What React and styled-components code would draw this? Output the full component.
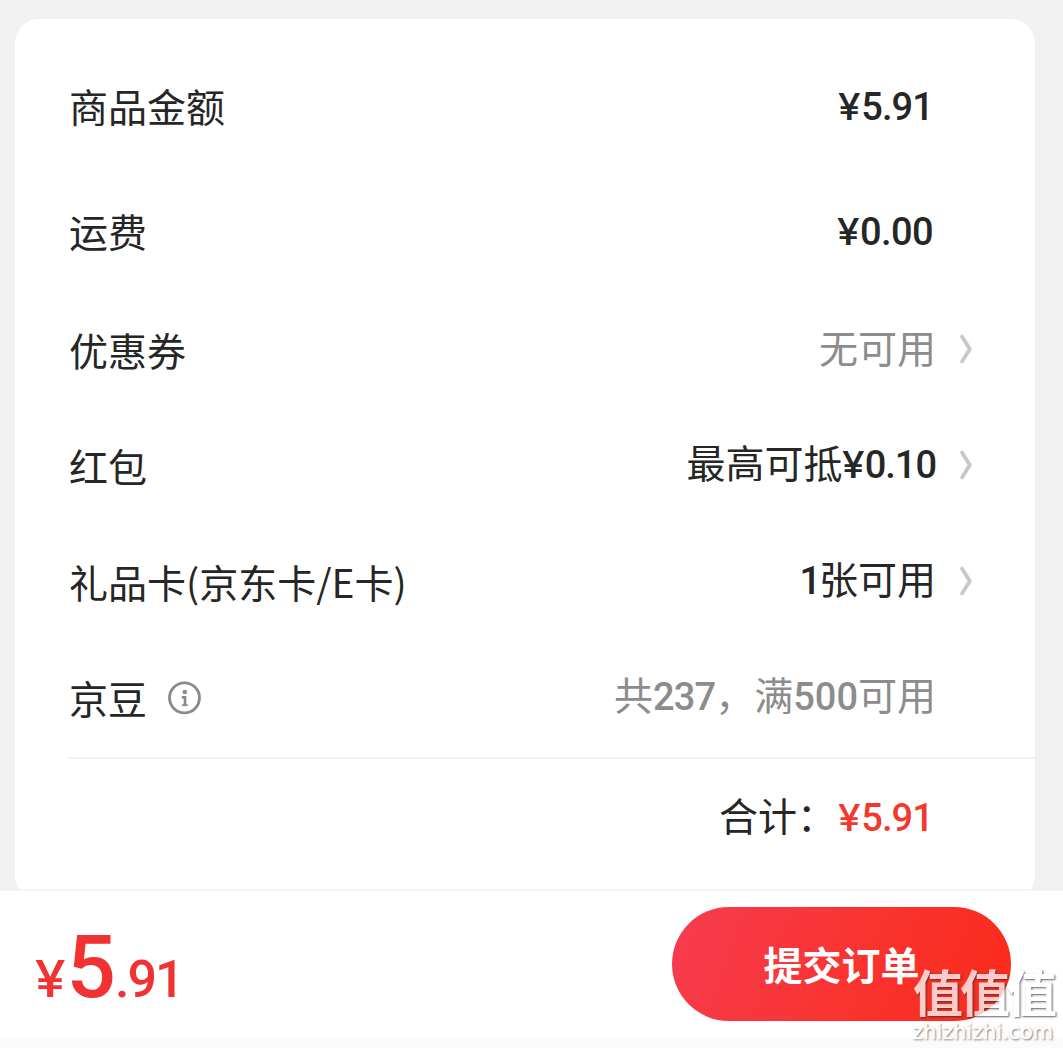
import React from 'react';
import styled, { createGlobalStyle } from 'styled-components';

const GlobalStyle = createGlobalStyle`
  * {
    box-sizing: border-box;
  }

  body {
    margin: 0;
    background: #f1f1f1;
    font-family: "Noto Sans CJK SC", sans-serif;
    color: #262626;
  }
`;

const Page = styled.div`
  display: flex;
  flex-direction: column;
  width: 1063px;
  height: 1048px;
  overflow: hidden;
`;

const Content = styled.main`
  height: 889px;
  padding: 19px 28px 0 15px;
  overflow: hidden;
`;

const Card = styled.section`
  height: 880px;
  padding-top: 25px;
  background: #fff;
  border-radius: 24px;
`;

const Row = styled.div`
  display: flex;
  align-items: center;
  justify-content: space-between;
  height: ${props => props.$height || 116}px;
  padding: 0 62px ${props => props.$lift || 0}px 54px;
  font-size: 39px;
  line-height: 56px;
  white-space: nowrap;
`;

const Label = styled.div`
  display: flex;
  align-items: center;
  gap: 20px;
  padding-bottom: ${props => props.$lift || 0}px;
`;

const Value = styled.div`
  display: flex;
  align-items: baseline;
  margin-left: auto;
  padding: 0 ${props => props.$inset || 0}px ${props => props.$lift || 0}px 0;
  color: ${props => props.$muted ? '#8c8c8c' : '#262626'};
`;

const Num = styled.span`
  margin-right: ${props => props.$gap || 0}px;
  font-family: Roboto, sans-serif;
  font-size: 38px;
  font-weight: 500;
  letter-spacing: ${props => props.$spacing || 0}px;
  color: ${props => props.$red ? '#f23a2c' : 'inherit'};
`;

const Yen = styled.span`
  display: inline-block;
  margin-right: 0.07em;
  font-family: Inter, sans-serif;
  font-size: 0.97em;
  font-weight: 500;
  transform: scaleX(1.1);
`;

const ArrowSlot = styled.div`
  display: flex;
  justify-content: flex-end;
  width: 37px;
`;

const TotalRow = styled(Row)`
  height: 116px;
  margin-left: 54px;
  padding-left: 0;
  border-top: 2px solid #f2f2f2;
`;

const TotalLabel = styled.span`
  margin-right: 3px;
`;

const Footer = styled.footer`
  position: relative;
  display: flex;
  align-items: flex-start;
  justify-content: space-between;
  height: 159px;
  padding: 16px 52px 0 36px;
  background: #fff;
  border-top: 2px solid #f4f4f4;
  border-bottom: 10px solid #fbfbfb;
`;

const Price = styled.div`
  display: flex;
  align-items: baseline;
  padding-top: 10px;
  font-family: Roboto, sans-serif;
  font-size: 52px;
  font-weight: 500;
  line-height: 100px;
  letter-spacing: -2px;
  color: #f03232;
`;

const PriceMain = styled.span`
  margin: 0 1px 0 1px;
  font-size: 87px;
`;

const SubmitButton = styled.button`
  width: 339px;
  height: 114px;
  padding: 0 0 2px;
  border: 0;
  border-radius: 57px;
  background: linear-gradient(110deg, #f63c50 0%, #f93432 50%, #fb2a1a 100%);
  color: #fff;
  font-family: inherit;
  font-size: 39px;
  font-weight: 700;
`;

const Watermark = styled.div`
  position: absolute;
  right: 10px;
  bottom: -6px;
  display: flex;
  flex-direction: column;
  align-items: flex-end;
  color: #fff;
  text-shadow: 1px 1px 2px rgba(40, 40, 40, 0.95);
  white-space: nowrap;
  opacity: 0.75;
`;

const WatermarkTitle = styled.span`
  margin-right: -1px;
  font-size: 50px;
  font-weight: 700;
  line-height: 60px;
  letter-spacing: -3px;
`;

const WatermarkSite = styled.span`
  font-family: "DejaVu Sans", sans-serif;
  font-size: 20.8px;
  line-height: 24px;
  -webkit-text-stroke: 0.5px #fff;
`;

const Arrow = () => (
  <svg width="14" height="32" viewBox="0 0 14 32" fill="none">
    <path d="M3 3.5 L10.8 16 L3 28.5" stroke="#c8c8c8" strokeWidth="3.8" strokeLinecap="round" strokeLinejoin="round" />
  </svg>
);

const InfoIcon = () => (
  <svg width="36" height="36" viewBox="0 0 36 36" fill="none">
    <circle cx="17.5" cy="18.8" r="15" stroke="#8a8a8a" strokeWidth="2.8" />
    <circle cx="17.8" cy="13" r="2.3" fill="#8a8a8a" />
    <path d="M14.8 18.2 H18 V26.4" stroke="#8a8a8a" strokeWidth="2.6" />
    <path d="M15 26.2 H20.8" stroke="#8a8a8a" strokeWidth="1.8" />
  </svg>
);

const OrderRow = ({ label, height, lift, labelLift, valueLift, inset, muted, arrow, info, children }) => (
  <Row $height={height} $lift={lift}>
    <Label $lift={labelLift}>
      {label}
      {info && <InfoIcon />}
    </Label>
    <Value $muted={muted} $inset={inset} $lift={valueLift}>{children}</Value>
    <ArrowSlot>{arrow && <Arrow />}</ArrowSlot>
  </Row>
);

const App = () => {
  return (
    <>
      <GlobalStyle />
      <Page>
        <Content>
          <Card>
            <OrderRow label="商品金额" height={126} labelLift={5} inset={3}>
              <Num $spacing={-0.9}><Yen>¥</Yen>5.91</Num>
            </OrderRow>
            <OrderRow label="运费" height={123} labelLift={4} inset={3}>
              <Num $spacing={-0.6}><Yen>¥</Yen>0.00</Num>
            </OrderRow>
            <OrderRow label="优惠券" lift={4} valueLift={6} muted arrow>
              无可用
            </OrderRow>
            <OrderRow label="红包" lift={4} valueLift={4} arrow>
              最高可抵<Num $spacing={-1}><Yen>¥</Yen>0.10</Num>
            </OrderRow>
            <OrderRow label="礼品卡(京东卡/E卡)" lift={4} valueLift={4} arrow>
              <Num $gap={-2}>1</Num>张可用
            </OrderRow>
            <OrderRow label="京豆" lift={4} valueLift={4} muted info>
              共<Num $spacing={-0.9}>237</Num>，满<Num>500</Num>可用
            </OrderRow>
            <TotalRow>
              <Value $inset={3}>
                <TotalLabel>合计：</TotalLabel>
                <Num $red $spacing={-0.9}><Yen>¥</Yen>5.91</Num>
              </Value>
              <ArrowSlot />
            </TotalRow>
          </Card>
        </Content>
        <Footer>
          <Price>
            <Yen>¥</Yen>
            <PriceMain>5</PriceMain>.91
          </Price>
          <SubmitButton>提交订单</SubmitButton>
          <Watermark>
            <WatermarkTitle>值值值</WatermarkTitle>
            <WatermarkSite>zhizhizhi.com</WatermarkSite>
          </Watermark>
        </Footer>
      </Page>
    </>
  );
};

export default App;
